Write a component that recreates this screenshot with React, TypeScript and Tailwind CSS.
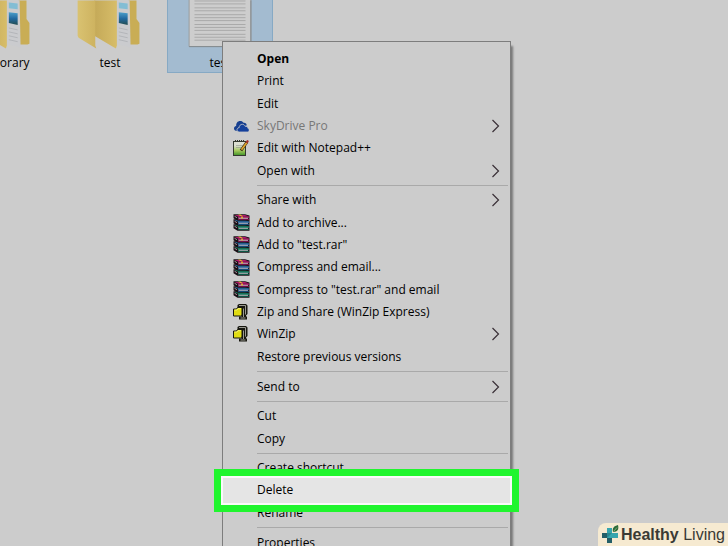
import React from 'react';
import { clsx } from 'clsx';

type IconName = 'cloud' | 'notepad' | 'rar' | 'zip';

interface MenuEntry {
  label: string;
  icon?: IconName;
  bold?: boolean;
  disabled?: boolean;
  submenu?: boolean;
  highlighted?: boolean;
}

interface MenuGroup {
  height: string;
  entries: MenuEntry[];
}

const groups: MenuGroup[] = [
  {
    height: 'min-h-[134px]',
    entries: [
      { label: 'Open', bold: true },
      { label: 'Print' },
      { label: 'Edit' },
      { label: 'SkyDrive Pro', icon: 'cloud', disabled: true, submenu: true },
      { label: 'Edit with Notepad++', icon: 'notepad' },
      { label: 'Open with', submenu: true },
    ],
  },
  {
    height: 'min-h-[179px]',
    entries: [
      { label: 'Share with', submenu: true },
      { label: 'Add to archive...', icon: 'rar' },
      { label: 'Add to "test.rar"', icon: 'rar' },
      { label: 'Compress and email...', icon: 'rar' },
      { label: 'Compress to "test.rar" and email', icon: 'rar' },
      { label: 'Zip and Share (WinZip Express)', icon: 'zip' },
      { label: 'WinZip', icon: 'zip', submenu: true },
      { label: 'Restore previous versions' },
    ],
  },
  { height: 'min-h-[23px]', entries: [{ label: 'Send to', submenu: true }] },
  { height: 'min-h-[45px]', entries: [{ label: 'Cut' }, { label: 'Copy' }] },
  {
    height: 'min-h-[67px]',
    entries: [
      { label: 'Create shortcut' },
      { label: 'Delete', highlighted: true },
      { label: 'Rename' },
    ],
  },
  { height: 'min-h-[23px]', entries: [{ label: 'Properties' }] },
];

const CloudIcon = () => (
  <svg className="h-4 w-4" viewBox="0 0 16 16" aria-hidden="true">
    <path
      d="M1 10.5c0-1.5 1-2.3 2.2-2.4C3 5.2 4.5 3 7.2 3c1.5 0 2.6.6 3.3 1.7 1.9-.3 3.2.9 3.2 2.6L12 9H6l-2 4C2 13 1 12 1 10.5Z"
      fill="#173f8f"
    />
    <path
      d="M6.5 14c-3.300 0-3.300-4-.4-4.300.1-2.200 1.500-3.400 3.200-3.400 1.400 0 2.300.8 2.700 1.900 1.800-.2 2.900.8 2.900 2.100 1.900.5 1.700 3.700-.6 3.700Z"
      fill="#14409b"
      stroke="#cccccc"
      strokeWidth="0.8"
    />
  </svg>
);

const NotepadIcon = () => (
  <svg className="h-4 w-4" viewBox="0 0 16 16" aria-hidden="true">
    <defs>
      <linearGradient id="page" x1="0" y1="0" x2="0" y2="1">
        <stop offset="0.3" stopColor="#dcdfd2" />
        <stop offset="0.65" stopColor="#a4c85a" />
        <stop offset="1" stopColor="#3d9228" />
      </linearGradient>
    </defs>
    <rect x="0.5" y="1.5" width="12" height="14" fill="url(#page)" stroke="#33382f" />
    <path d="M2 1h10" stroke="#33382f" strokeWidth="2" strokeDasharray="1 1" />
    <path d="M3 5.5h7M3 7.5h5" stroke="#8d9485" strokeWidth="0.6" />
    <path d="M14 2 8 10.500" stroke="#342310" strokeWidth="3" />
    <path d="M13.800 2.500 8.500 9.800" stroke="#dda52c" strokeWidth="1.8" />
    <path d="m15 .5-1.500 2.300" stroke="#a52f28" strokeWidth="2.2" />
  </svg>
);

const RarIcon = () => {
  const books = [
    { y: 11, cover: '#15906c', edge: '#0c6a52' },
    { y: 6, cover: '#2a78b8', edge: '#135a92' },
    { y: 1, cover: '#b5196c', edge: '#8c1052' },
  ];
  return (
    <svg className="h-[17px] w-[17px]" viewBox="0 0 17 17" aria-hidden="true">
      {books.map(({ y, cover, edge }) => (
        <g key={y}>
          <path d={`M0.5 ${y - 0.8}h11.500l4.500 1.300v5.300H4.500l-4-2.500Z`} fill="#1a1016" />
          <path d={`M1.500 ${y}h10.500l4 1.500H5Z`} fill={cover} />
          <path d={`M5 ${y + 1.500}h11v1.300H5Z`} fill={cover} />
          <path d={`M5.500 ${y + 2.800}h9.500v1H5.500Z`} fill="#ddd3dc" />
          <path d={`M5 ${y + 3.800}h11v1H5Z`} fill={edge} />
          <path d={`M1.500 ${y + 1.200}l2.500 1.500`} stroke="#c9b4bb" strokeWidth="0.8" />
        </g>
      ))}
      <path d="M5 .5h2.500l2 1.500H7Z" fill="#e0ae35" />
      <path d="M8 2.500h2v2H8Z" fill="#d9a63a" />
    </svg>
  );
};

const ZipIcon = () => (
  <svg className="h-4 w-4" viewBox="0 0 16 16" aria-hidden="true">
    <path d="M4.500 1 6 0h7l1.500 1.500v8.500L13 11.500v1h1v3H6v-3h2.500V11h-4Z" fill="#16160f" />
    <path d="M6 1.500h6.500v9M10.500 4.500v8.500M7.500 14h5" fill="none" stroke="#a9a9a0" strokeWidth="0.9" />
    <path d="M.5 5h3l1-1.500H9V11l-1.500 1h-7Z" fill="#e0dc12" stroke="#16160f" />
    <path d="M1.500 6H4l1-1.300h3" fill="none" stroke="#f7f58a" strokeWidth="0.8" />
  </svg>
);

const icons: Record<IconName, React.FC> = {
  cloud: CloudIcon,
  notepad: NotepadIcon,
  rar: RarIcon,
  zip: ZipIcon,
};

const FolderPicture = () => (
  <svg className="h-[50px] w-full" viewBox="0 0 106 50" aria-hidden="true">
    <defs>
      <linearGradient id="flap" x1="0" y1="0" x2="1" y2="0">
        <stop offset="0" stopColor="#d9c271" />
        <stop offset="1" stopColor="#cdb25f" />
      </linearGradient>
      <linearGradient id="front" x1="0" y1="0" x2="1" y2="0">
        <stop offset="0" stopColor="#c4a958" />
        <stop offset="1" stopColor="#d7bd69" />
      </linearGradient>
      <linearGradient id="photo" x1="0" y1="0" x2="0" y2="1">
        <stop offset="0" stopColor="#4c9fcb" />
        <stop offset="0.5" stopColor="#2169a0" />
        <stop offset="1" stopColor="#234d50" />
      </linearGradient>
    </defs>
    <path d="M72 0h8v19l3 4v21l-2 1h-9Z" fill="#c9ad55" />
    <path d="M59 0h14l1 48-15-4Z" fill="#cacbce" />
    <path d="M62 2l9 1v6l-9-1Z" fill="#83bdd4" />
    <path d="M62 12l9 1v12l-9-2Z" fill="url(#photo)" />
    <path d="M62 28l9 2M62 32l9 2M62 36l9 2M62 40l9 2" stroke="#b2b5b9" strokeWidth="1" />
    <path d="M37 0h23v46l-1 3-22-13Z" fill="url(#front)" />
    <path d="M20 0h18v46l1 3L21 38l-1-2Z" fill="url(#flap)" />
  </svg>
);

const DocumentPicture = () => (
  <svg className="h-[50px] w-full" viewBox="0 0 106 50" aria-hidden="true">
    <path d="M21.5-1h63v48h-63Z" fill="#cdcdcd" stroke="#9a9c9e" />
    <path d="M84.5 0v47h-63" fill="none" stroke="#858b90" />
    {[0, 3, 7, 10, 14, 17, 20, 24, 27, 30, 34, 37, 40].map((y) => (
      <path key={y} d={`M27 ${y + 0.5}h52`} stroke="#a9a9a9" strokeWidth="1" />
    ))}
  </svg>
);

const DesktopItem: React.FC<{ label: string; selected?: boolean; children: React.ReactNode }> = ({
  label,
  selected,
  children,
}) => (
  <button
    type="button"
    className={clsx(
      'flex h-[73px] w-[106px] shrink-0 flex-col items-center border border-t-0',
      selected ? 'border-[#86a9c4] bg-[#a3bbd0]' : 'border-transparent'
    )}
  >
    {children}
    <span className="mt-[5px] leading-4">{label}</span>
  </button>
);

const MenuRow: React.FC<{ entry: MenuEntry }> = ({ entry }) => {
  const Icon = entry.icon ? icons[entry.icon] : null;
  return (
    <button
      type="button"
      role="menuitem"
      disabled={entry.disabled}
      className={clsx(
        'relative flex w-full items-center pr-[9px] text-left',
        entry.bold && 'font-bold',
        entry.disabled && 'text-[#777777]'
      )}
    >
      {entry.highlighted && (
        <span className="absolute -inset-x-[9px] -inset-y-[10px] z-10 border-7 border-[#20f52e] bg-[#fafafa] p-0.5">
          <span className="block h-full bg-[#e5e5e5]" />
        </span>
      )}
      <span className="flex w-[34px] shrink-0 justify-center pl-0.5">{Icon && <Icon />}</span>
      <span className={clsx('flex-1 whitespace-nowrap leading-4', entry.highlighted && 'relative z-20')}>
        {entry.label}
      </span>
      {entry.submenu && (
        <svg className="h-[14px] w-[10px]" viewBox="0 0 10 14" aria-hidden="true">
          <path d="m1.5 1 6 6-6 6" fill="none" stroke="#3a3037" strokeWidth="1.2" />
        </svg>
      )}
    </button>
  );
};

const Watermark = () => (
  <div className="absolute right-0 bottom-0 flex h-[23px] items-center gap-0.5 rounded-tl-lg bg-[#f6ead1] px-[3px] font-['Liberation_Sans',Arial,sans-serif] text-[16px] leading-5 text-[#3a3a35]">
    <svg className="h-5 w-[18px]" viewBox="0 0 18 20" aria-hidden="true">
      <path d="M6 3h5v5h6v5h-6v5H6v-5H1V8h5Z" fill="#36a5ae" />
      <path d="M1 8h5v5H1ZM6 13h5v5H6Z" fill="#245f68" />
      <path d="M6 8h5l-5 5Z" fill="#2b8790" />
      <path d="M12 7c-1-4 1-6 5-7 1 4 0 7-5 7Z" fill="#2c6b38" />
      <path d="m12.500 6.500 3.500-4" stroke="#b9d5a4" strokeWidth="0.6" />
    </svg>
    <span className="whitespace-nowrap">
      <b>Healthy</b> Living
    </span>
  </div>
);

const App: React.FC = () => {
  return (
    <main className="relative h-screen overflow-hidden bg-[#cccccc] font-['Open_Sans','Noto_Sans',sans-serif] text-[12px] text-black">
      <div className="-ml-[53px] flex gap-1">
        <DesktopItem label="temporary">
          <FolderPicture />
        </DesktopItem>
        <DesktopItem label="test">
          <FolderPicture />
        </DesktopItem>
        <DesktopItem label="test" selected>
          <DocumentPicture />
        </DesktopItem>
      </div>

      {/* Context menu */}
      <div
        role="menu"
        className="absolute top-[41px] left-[222px] w-[289px] border border-[#7d7d7d] bg-[#cccccc] py-[6px] shadow-[3px_4px_2px_-1px_#777777]"
      >
        {groups.map((group, i) => (
          <React.Fragment key={i}>
            {i > 0 && <hr className="my-[3px] mr-[2px] ml-[34px] border-t border-[#a9a9a9]" />}
            <div className={clsx('grid auto-rows-fr', group.height)}>
              {group.entries.map((entry) => (
                <MenuRow key={entry.label} entry={entry} />
              ))}
            </div>
          </React.Fragment>
        ))}
      </div>

      <Watermark />
    </main>
  );
};

export default App;
